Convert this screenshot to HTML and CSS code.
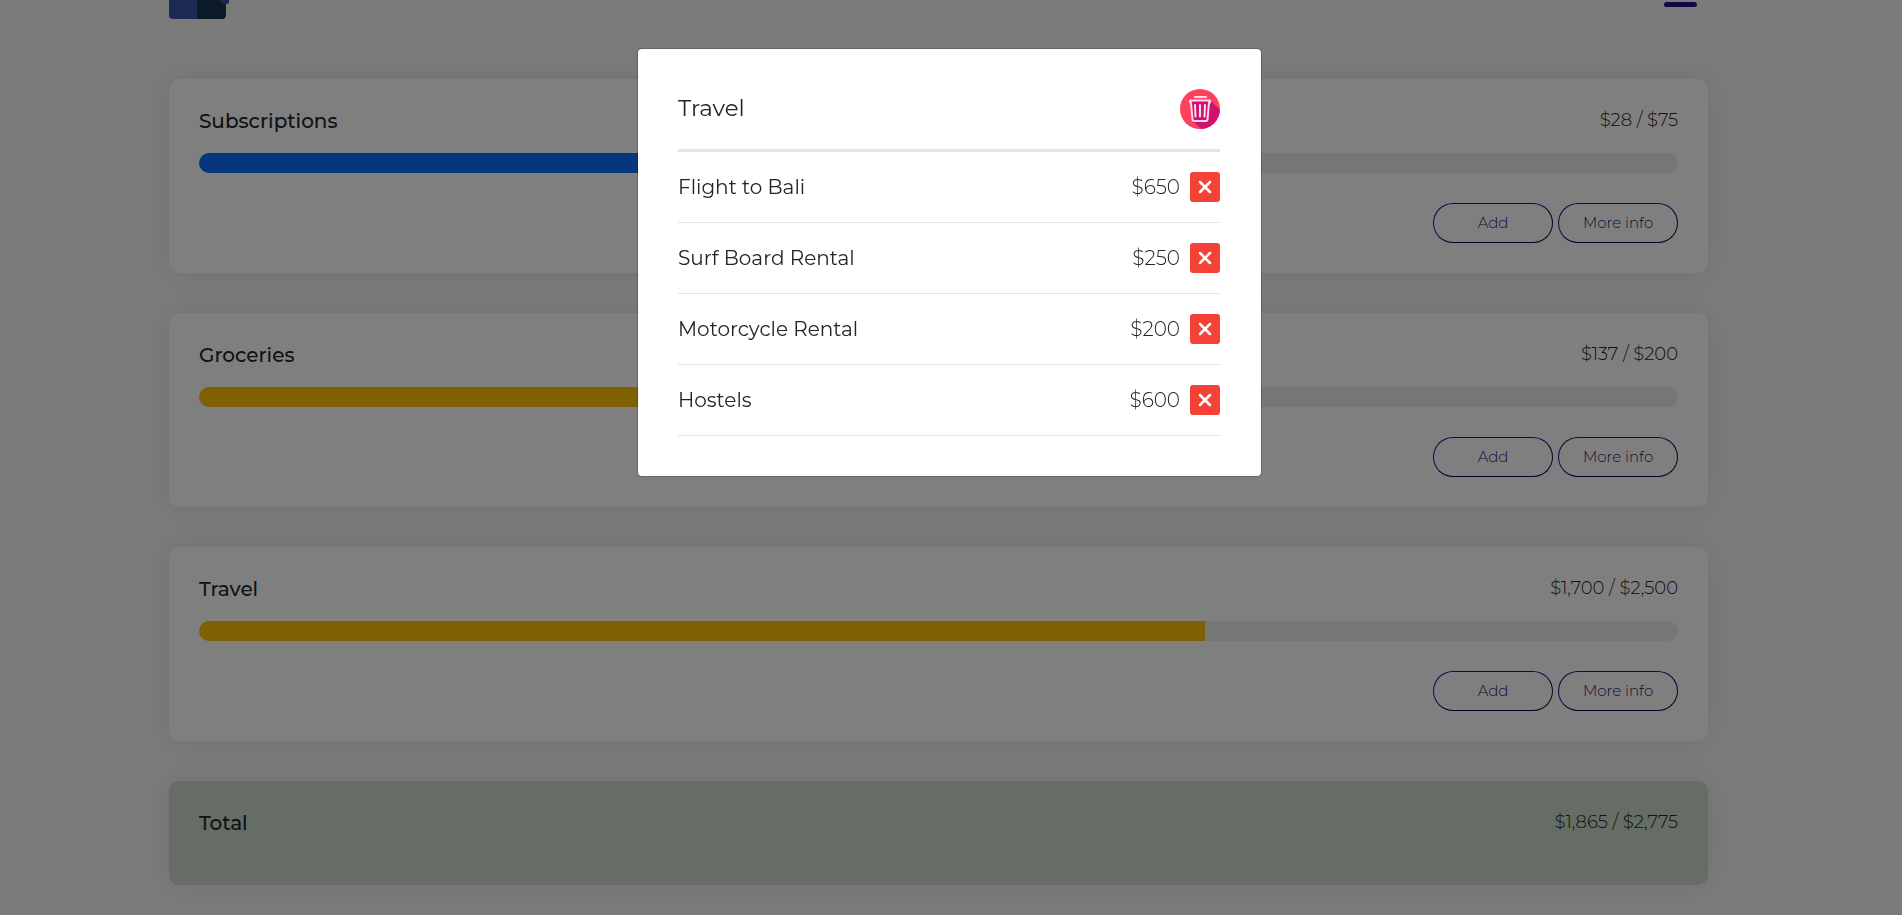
FILE: index.html
```html
<!DOCTYPE html>
<html lang="en">
<head>
<meta charset="utf-8">
<meta name="viewport" content="width=device-width, initial-scale=1">
<title>Budgets</title>
<link rel="stylesheet" href="styles.css">
</head>
<body>
<div class="page">
  <header class="topbar">
    <svg class="logo" viewBox="0 0 60 19" aria-hidden="true">
      <path fill="#3a55a8" d="M0 0h28v19H4a4 4 0 0 1-4-4z"/>
      <path fill="#1a3555" d="M28 0h29v15a4 4 0 0 1-4 4H28z"/>
      <path fill="#3850a8" d="M51 0h9v2a2 2 0 0 1-2 2h-2q-4 0-5-4z"/>
    </svg>
    <button class="menu" type="button" aria-label="Menu"><span class="menu-bar"></span></button>
  </header>
  <main class="budgets">
    <section class="card">
      <div class="card-head"><h2 class="card-title">Subscriptions</h2><span class="amount">$28 / $75</span></div>
      <div class="progress"><div class="bar bar-blue" style="width:37.33%"></div></div>
      <div class="actions"><button class="pill" type="button">Add</button><button class="pill" type="button">More info</button></div>
    </section>
    <section class="card">
      <div class="card-head"><h2 class="card-title">Groceries</h2><span class="amount">$137 / $200</span></div>
      <div class="progress"><div class="bar bar-amber" style="width:68.5%"></div></div>
      <div class="actions"><button class="pill" type="button">Add</button><button class="pill" type="button">More info</button></div>
    </section>
    <section class="card">
      <div class="card-head"><h2 class="card-title">Travel</h2><span class="amount">$1,700 / $2,500</span></div>
      <div class="progress"><div class="bar bar-amber" style="width:68%"></div></div>
      <div class="actions"><button class="pill" type="button">Add</button><button class="pill" type="button">More info</button></div>
    </section>
    <section class="card card-total">
      <div class="card-head"><h2 class="card-title">Total</h2><span class="amount">$1,865 / $2,775</span></div>
    </section>
  </main>
</div>
<div class="overlay">
  <div class="modal" role="dialog" aria-modal="true" aria-labelledby="modal-title">
    <div class="modal-head">
      <h1 class="modal-title" id="modal-title">Travel</h1>
      <button class="trash" type="button" aria-label="Delete budget">
        <svg viewBox="0 0 40 40" aria-hidden="true">
          <defs><clipPath id="disc"><circle cx="20" cy="20" r="20"/></clipPath></defs>
          <circle cx="20" cy="20" r="20" fill="#ff415b"/>
          <path clip-path="url(#disc)" fill="#d1116f" d="M30 11l12 12v19H24L12 32l-1-19z"/>
          <path fill="none" stroke="#ffdcec" stroke-width="2" stroke-linejoin="round" stroke-linecap="round" d="M10 11.500h20v2h-1l-1.500 17q-.2 1.500-1.500 1.500H14q-1.300 0-1.500-1.500l-1.500-17h-1zM15 8h11"/>
          <path fill="none" stroke="#ffdcec" stroke-width="2" stroke-linecap="round" d="M15 16l.5 11.500M20 16v11.500M25 16l-.5 11.500"/>
        </svg>
      </button>
    </div>
    <ul class="expenses">
      <li class="expense"><span class="name">Flight to Bali</span><span class="cost">$650</span><button class="remove" type="button" aria-label="Remove Flight to Bali"><svg viewBox="0 0 30 30"><path d="M10 10l10 10M20 10L10 20"/></svg></button></li>
      <li class="expense"><span class="name">Surf Board Rental</span><span class="cost">$250</span><button class="remove" type="button" aria-label="Remove Surf Board Rental"><svg viewBox="0 0 30 30"><path d="M10 10l10 10M20 10L10 20"/></svg></button></li>
      <li class="expense"><span class="name">Motorcycle Rental</span><span class="cost">$200</span><button class="remove" type="button" aria-label="Remove Motorcycle Rental"><svg viewBox="0 0 30 30"><path d="M10 10l10 10M20 10L10 20"/></svg></button></li>
      <li class="expense"><span class="name">Hostels</span><span class="cost">$600</span><button class="remove" type="button" aria-label="Remove Hostels"><svg viewBox="0 0 30 30"><path d="M10 10l10 10M20 10L10 20"/></svg></button></li>
    </ul>
  </div>
</div>
</body>
</html>
```
FILE: styles.css
```css
* { box-sizing: border-box; }
body {
  margin: 0;
  padding-right: 25px;
  background: #f7f7f7;
  color: #212529;
  font-family: Montserrat, Inter, "Open Sans", sans-serif;
}
button { font-family: inherit; cursor: pointer; }
h1, h2, ul { margin: 0; padding: 0; }
svg { display: block; }

.page { width: 82%; margin: 0 auto; }
.topbar { display: flex; justify-content: space-between; align-items: flex-start; margin-bottom: 60px; }
.logo { width: 60px; height: 19px; }
.menu { border: 0; background: none; padding: 2px 11px 0 0; }
.menu-bar { display: block; width: 33px; height: 5px; border-radius: 3px; background: #1c1495; }

.budgets { display: flex; flex-direction: column; gap: 40px; padding-bottom: 20px; }
.card {
  padding: 30px;
  border-radius: 10px;
  background: #fff;
  box-shadow: 0 0 30px rgba(0, 0, 0, .1);
}
.card-total { background: #cadbc9; padding-bottom: 50px; }
.card-head { display: flex; justify-content: space-between; align-items: flex-start; height: 24px; }
.card-title { font-size: 20px; font-weight: 500; line-height: 24px; }
.amount { font-size: 18px; font-weight: 300; line-height: 22px; }
.progress { height: 20px; margin: 20px 0 30px; border-radius: 10px; background: #e9ecef; overflow: hidden; }
.bar { height: 100%; }
.bar-blue { background: #0d6efd; }
.bar-amber { background: #ffc107; }
.actions { display: flex; justify-content: flex-end; gap: 5px; }
.pill {
  width: 120px;
  height: 40px;
  padding: 0 0 2px;
  border: 1px solid;
  border-color: #1c1495 #0e0a4a #0e0a4a #1c1495;
  border-radius: 20px;
  background: transparent;
  color: #1c1475;
  font-size: 15px;
  font-weight: 300;
}

.overlay {
  position: fixed;
  inset: 0;
  display: flex;
  justify-content: center;
  align-items: flex-start;
  padding: 48px 3px 0 0;
  background: rgba(0, 0, 0, .5);
}
.modal {
  width: 625px;
  max-width: 100%;
  padding: 40px 41px 40px 40px;
  border: 1px solid rgba(0, 0, 0, .2);
  border-radius: 5px;
  background: #fff;
  background-clip: padding-box;
}
.modal-head { display: flex; justify-content: space-between; align-items: flex-start; padding-bottom: 20px; border-bottom: 3px solid #e4e4e4; }
.modal-title { font-size: 23px; font-weight: 400; line-height: 38px; }
.trash { width: 40px; height: 40px; padding: 0; border: 0; border-radius: 50%; background: none; }
.expenses { list-style: none; }
.expense { display: flex; align-items: center; padding: 20px 0; border-bottom: 1px solid #e4e4e4; line-height: 30px; font-size: 20px; }
.name { flex: 1; }
.cost { margin-right: 10px; font-weight: 300; }
.remove { width: 30px; height: 30px; padding: 0; border: 0; border-radius: 3px; background: #f44336; }
.remove path { fill: none; stroke: #fff; stroke-width: 2.500; stroke-linecap: round; }
```
